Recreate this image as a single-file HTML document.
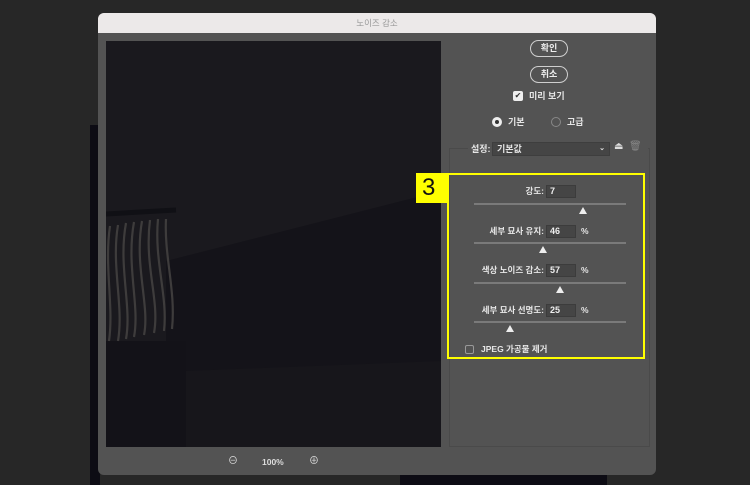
<!DOCTYPE html>
<html><head><meta charset="utf-8"><style>
*{margin:0;padding:0;box-sizing:border-box}
html,body{width:750px;height:485px;overflow:hidden}
body{background:#272727;position:relative;font-family:"Liberation Sans","Noto Sans CJK KR",sans-serif;color:#e6e6e6;font-size:9px;line-height:12px}
.a{position:absolute}
.btn{position:absolute;border:1px solid #cfcfcf;border-radius:9px;width:38px;height:17px;text-align:center;line-height:15px;font-size:9px;color:#eee;font-weight:bold}
.in{position:absolute;background:#454545;border:1px solid #3c3c3c;height:13px;width:30px;font-size:9px;line-height:11px;padding-left:3px;color:#eee;font-weight:bold}
.tr{position:absolute;height:2px;background:#7a7a7a;left:474px;width:152px}
.th{position:absolute;width:0;height:0;border-left:4px solid transparent;border-right:4px solid transparent;border-bottom:7px solid #eee}
.lb{position:absolute;text-align:right;font-size:8.5px;width:120px;line-height:13px;font-weight:bold}
.pc{position:absolute;font-size:8.5px;left:581px;line-height:13px;font-weight:bold}
b{font-weight:bold}
</style></head><body>
<div class="a" style="left:90px;top:125px;width:10px;height:360px;background:#0d0c14"></div>
<div class="a" style="left:400px;top:470px;width:207px;height:15px;background:#0d0c14"></div>
<div class="a" style="left:98px;top:13px;width:558px;height:462px;background:#535353;border-radius:6px;overflow:hidden">
 <div class="a" style="left:0;top:0;width:558px;height:20px;background:#ece9e9;text-align:center;line-height:20px;color:#999;font-size:8.5px">노이즈 감소</div>
</div>
<div class="a" style="left:106px;top:41px;width:335px;height:406px;background:#1a191e;overflow:hidden">
 <svg class="a" style="left:0;top:0" width="335" height="406">
 <path d="M60 220 L335 150 L335 406 L60 406 Z" fill="#141319"/>
 <path d="M0 300 L80 300 L80 406 L0 406Z" fill="#131218"/>
 <path d="M80 330 L335 320 L335 406 L80 406Z" fill="#17161b"/>
 <g stroke="#3e3c3c" stroke-width="2.2" fill="none">
 <path d="M4 185 C-2 225 8 265 3 300"/><path d="M12 184 C5 225 18 265 12 300"/><path d="M20 182 C12 225 26 265 20 298"/><path d="M28 181 C20 225 34 265 28 296"/><path d="M36 180 C28 225 44 265 38 294"/><path d="M44 179 C38 225 54 260 48 292"/><path d="M52 178 C48 220 62 255 58 290"/><path d="M60 178 C58 215 70 250 66 288"/></g>
 <path d="M0 173 L70 169" stroke="#101015" stroke-width="5"/></svg>
</div>
<div class="a" style="left:228px;top:456px;font-size:10px;color:#ddd">⊖</div>
<div class="a" style="left:262px;top:456px;font-size:8.5px;color:#ddd;font-weight:bold">100%</div>
<div class="a" style="left:309px;top:456px;font-size:10px;color:#ddd">⊕</div>
<div class="btn" style="left:530px;top:40px">확인</div>
<div class="btn" style="left:530px;top:66px">취소</div>
<div class="a" style="left:513px;top:91px;width:10px;height:10px;background:#eee;border-radius:2px;color:#333;font-size:8px;line-height:10px;text-align:center">✔</div>
<div class="a" style="left:529px;top:90px;font-weight:bold">미리 보기</div>
<div class="a" style="left:492px;top:117px;width:10px;height:10px;border-radius:50%;background:#eee;border:3px solid #eee"><div style="width:4px;height:4px;background:#333;border-radius:50%"></div></div>
<div class="a" style="left:508px;top:116px;font-weight:bold">기본</div>
<div class="a" style="left:551px;top:117px;width:10px;height:10px;border-radius:50%;border:1px solid #888"></div>
<div class="a" style="left:567px;top:116px;font-weight:bold">고급</div>
<div class="a" style="left:449px;top:148px;width:201px;height:299px;border:1px solid #4a4a4a"></div>
<div class="a" style="left:468px;top:142px;width:180px;height:14px;background:#535353"></div>
<div class="a" style="left:471px;top:143px;font-weight:bold">설정:</div>
<div class="a" style="left:492px;top:142px;width:118px;height:14px;background:#454545;border:1px solid #3e3e3e;padding-left:4px;line-height:12px;font-weight:bold">기본값<span style="position:absolute;right:4px;font-size:7px">⌄</span></div>
<div class="a" style="left:614px;top:141px;font-size:10px;color:#ddd">⏏</div>
<div class="a" style="left:629px;top:141px;font-size:10px;color:#888">🗑</div>
<div class="a" style="left:447px;top:173px;width:198px;height:186px;border:2px solid #ffff00"></div>
<div class="a" style="left:416px;top:173px;width:31px;height:30px;background:#ffff00;color:#111;font-size:24px;line-height:30px;padding-left:6px">3</div>
<div class="lb" style="left:424px;top:185px">강도:</div><div class="in" style="left:546px;top:185px">7</div>
<div class="tr" style="top:203px"></div><div class="th" style="left:579px;top:207px"></div>
<div class="lb" style="left:424px;top:225px">세부 묘사 유지:</div><div class="in" style="left:546px;top:225px">46</div><div class="pc" style="top:225px">%</div>
<div class="tr" style="top:242px"></div><div class="th" style="left:539px;top:246px"></div>
<div class="lb" style="left:424px;top:264px">색상 노이즈 감소:</div><div class="in" style="left:546px;top:264px">57</div><div class="pc" style="top:264px">%</div>
<div class="tr" style="top:282px"></div><div class="th" style="left:556px;top:286px"></div>
<div class="lb" style="left:424px;top:304px">세부 묘사 선명도:</div><div class="in" style="left:546px;top:304px">25</div><div class="pc" style="top:304px">%</div>
<div class="tr" style="top:321px"></div><div class="th" style="left:506px;top:325px"></div>
<div class="a" style="left:465px;top:345px;width:9px;height:9px;border:1px solid #999;border-radius:2px"></div>
<div class="a" style="left:481px;top:343px;font-size:8.5px;font-weight:bold">JPEG 가공물 제거</div>
</body></html>
